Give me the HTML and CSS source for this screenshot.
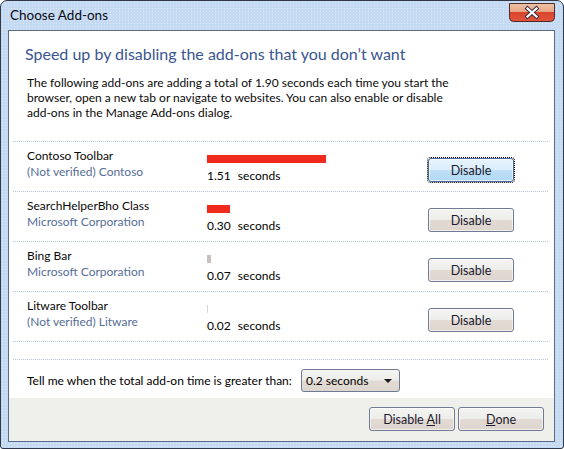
FILE: index.html
```html
<!DOCTYPE html>
<html>
<head>
<meta charset="utf-8">
<title>Choose Add-ons</title>
<link rel="stylesheet" href="styles.css">
</head>
<body>
<div class="window">
  <div class="titlebar">
    <span class="title">Choose Add-ons</span>
    <div class="close">
      <svg width="46" height="19" viewBox="0 0 46 19">
        <defs>
          <linearGradient id="cg" x1="0" y1="0" x2="0" y2="1">
            <stop offset="0" stop-color="#efc3a6"/>
            <stop offset="0.45" stop-color="#e6a784"/>
            <stop offset="0.5" stop-color="#d9432c"/>
            <stop offset="1" stop-color="#e2563c"/>
          </linearGradient>
        </defs>
        <path d="M0.5 0.5 H45.5 V14.5 Q45.5 18.5 41.5 18.5 H4.5 Q0.5 18.5 0.5 14.5 Z" fill="url(#cg)" stroke="#4b2b2b"/>
        <path d="M18.5 5.5 L27.5 13.5 M27.5 5.5 L18.5 13.5" stroke="#3d3346" stroke-width="4.2" stroke-linecap="square"/>
        <path d="M18.5 5.5 L27.5 13.5 M27.5 5.5 L18.5 13.5" stroke="#ffffff" stroke-width="2.2" stroke-linecap="square"/>
      </svg>
    </div>
  </div>
  <div class="client">
    <div class="main">
      <h1 class="heading">Speed up by disabling the add-ons that you don’t want</h1>
      <p class="intro">The following add-ons are adding a total of 1.90 seconds each time you start the<br>browser, open a new tab or navigate to websites. You can also enable or disable<br>add-ons in the Manage Add-ons dialog.</p>
      <div class="list">
        <div class="row">
          <div class="info"><div class="name">Contoso Toolbar</div><div class="pub">(Not verified) Contoso</div></div>
          <div class="timing"><div class="bar red" style="width:119px"></div><div class="secs">1.51&nbsp; seconds</div></div>
          <button class="btn hot">Disable</button>
        </div>
        <div class="row">
          <div class="info"><div class="name">SearchHelperBho Class</div><div class="pub">Microsoft Corporation</div></div>
          <div class="timing"><div class="bar red" style="width:23px"></div><div class="secs">0.30&nbsp; seconds</div></div>
          <button class="btn">Disable</button>
        </div>
        <div class="row">
          <div class="info"><div class="name">Bing Bar</div><div class="pub">Microsoft Corporation</div></div>
          <div class="timing"><div class="bar grey" style="width:4px"></div><div class="secs">0.07&nbsp; seconds</div></div>
          <button class="btn">Disable</button>
        </div>
        <div class="row last">
          <div class="info"><div class="name">Litware Toolbar</div><div class="pub">(Not verified) Litware</div></div>
          <div class="timing"><div class="bar faint" style="width:1px"></div><div class="secs">0.02&nbsp; seconds</div></div>
          <button class="btn">Disable</button>
        </div>
      </div>
      <div class="notify">
        <span class="notify-label">Tell me when the total add-on time is greater than:</span>
        <div class="select"><span class="select-text">0.2 seconds</span><span class="arrow"></span></div>
      </div>
    </div>
    <div class="footer">
      <button class="btn">Disable <u>A</u>ll</button>
      <button class="btn"><u>D</u>one</button>
    </div>
  </div>
</div>
</body>
</html>
```

FILE: styles.css
```css
* { box-sizing: border-box; }
html, body { margin: 0; padding: 0; }
body {
  width: 564px;
  height: 449px;
  background: #ffffff;
  font-family: Lato, "Noto Sans", sans-serif;
  font-size: 12px;
  color: #000;
  overflow: hidden;
}
.window {
  width: 564px;
  height: 449px;
  border: 1px solid #30384a;
  border-radius: 7px 7px 3px 3px;
  background-color: #c4daf2;
  background-image: radial-gradient(circle, rgba(255,255,255,0.35) 0.6px, transparent 0.9px);
  background-size: 3px 3px;
  padding: 0 8px 6px 7px;
  display: flex;
  flex-direction: column;
}
.titlebar {
  height: 29px;
  display: flex;
  justify-content: space-between;
  align-items: flex-start;
  padding-left: 2px;
}
.title {
  padding-top: 6px;
  font-size: 13.5px;
  line-height: 17px;
  color: #0a0a14;
}
.close { margin-top: 2px; height: 19px; }
.close svg { display: block; }
.client {
  height: 412px;
  border: 1px solid #5b6a86;
  background: #fff;
  display: flex;
  flex-direction: column;
}
.main { flex: 1; padding-top: 13px; }
.heading {
  margin: 0;
  padding-left: 16px;
  font-size: 16px;
  font-weight: normal;
  line-height: 20px;
  color: #3a5592;
}
.intro {
  margin: 11px 0 0 0;
  padding-left: 18px;
  line-height: 15px;
  color: #0a0a0a;
}
.list { margin: 21px 6px 0 4px; }
.row {
  height: 50px;
  border-top: 1px dotted #b4c4dc;
  display: grid;
  grid-template-columns: 180px 221px 86px;
  align-items: start;
  padding-left: 14px;
}
.row.last { height: 51px; border-bottom: 1px dotted #b4c4dc; }
.info { padding-top: 6px; line-height: 16px; }
.name { color: #0a0a0a; }
.pub { color: #566e98; }
.timing { padding-top: 13px; }
.bar { height: 8px; }
.bar.red { background: #ee2b1d; }
.bar.grey { background: #cbbfc0; }
.bar.faint { background: #d6d6d6; }
.secs { margin-top: 5px; line-height: 16px; word-spacing: 0.5px; }
.btn {
  width: 86px;
  height: 24px;
  padding: 0;
  border: 1px solid #707a92;
  border-radius: 3px;
  background: linear-gradient(#f4f4f2 0%, #ededea 48%, #e3dad3 52%, #ddd5cf 100%);
  box-shadow: inset 0 0 0 1px rgba(255,255,255,0.6);
  font-family: Lato, "Noto Sans", sans-serif;
  font-size: 12.5px;
  color: #1b1b30;
}
.row .btn { margin-top: 16px; }
.btn.hot {
  border-color: #4f6a96;
  background: linear-gradient(#e6f3fc 0%, #dbeefb 48%, #bfe0f6 52%, #b2d8f3 100%);
  outline: 1px dotted #000;
  outline-offset: 0;
}
.notify {
  margin: 17px 6px 0 4px;
  border-top: 1px dotted #b4c4dc;
  padding: 9px 0 0 14px;
  display: flex;
  align-items: center;
}
.notify-label { width: 274px; line-height: 16px; padding-top: 1px; }
.select {
  width: 99px;
  height: 23px;
  border: 1px solid #707a92;
  border-radius: 3px;
  background: linear-gradient(#f4f4f2 0%, #ededea 48%, #e3dad3 52%, #ddd5cf 100%);
  display: flex;
  align-items: center;
  justify-content: space-between;
  padding: 0 7px 0 4px;
}
.arrow {
  width: 0;
  height: 0;
  border-left: 4px solid transparent;
  border-right: 4px solid transparent;
  border-top: 4px solid #1a1a1a;
}
.footer {
  height: 43px;
  background: #efefeb;
  display: flex;
  justify-content: flex-end;
  align-items: flex-start;
  gap: 3px;
  padding: 9px 10px 0 0;
}
```
